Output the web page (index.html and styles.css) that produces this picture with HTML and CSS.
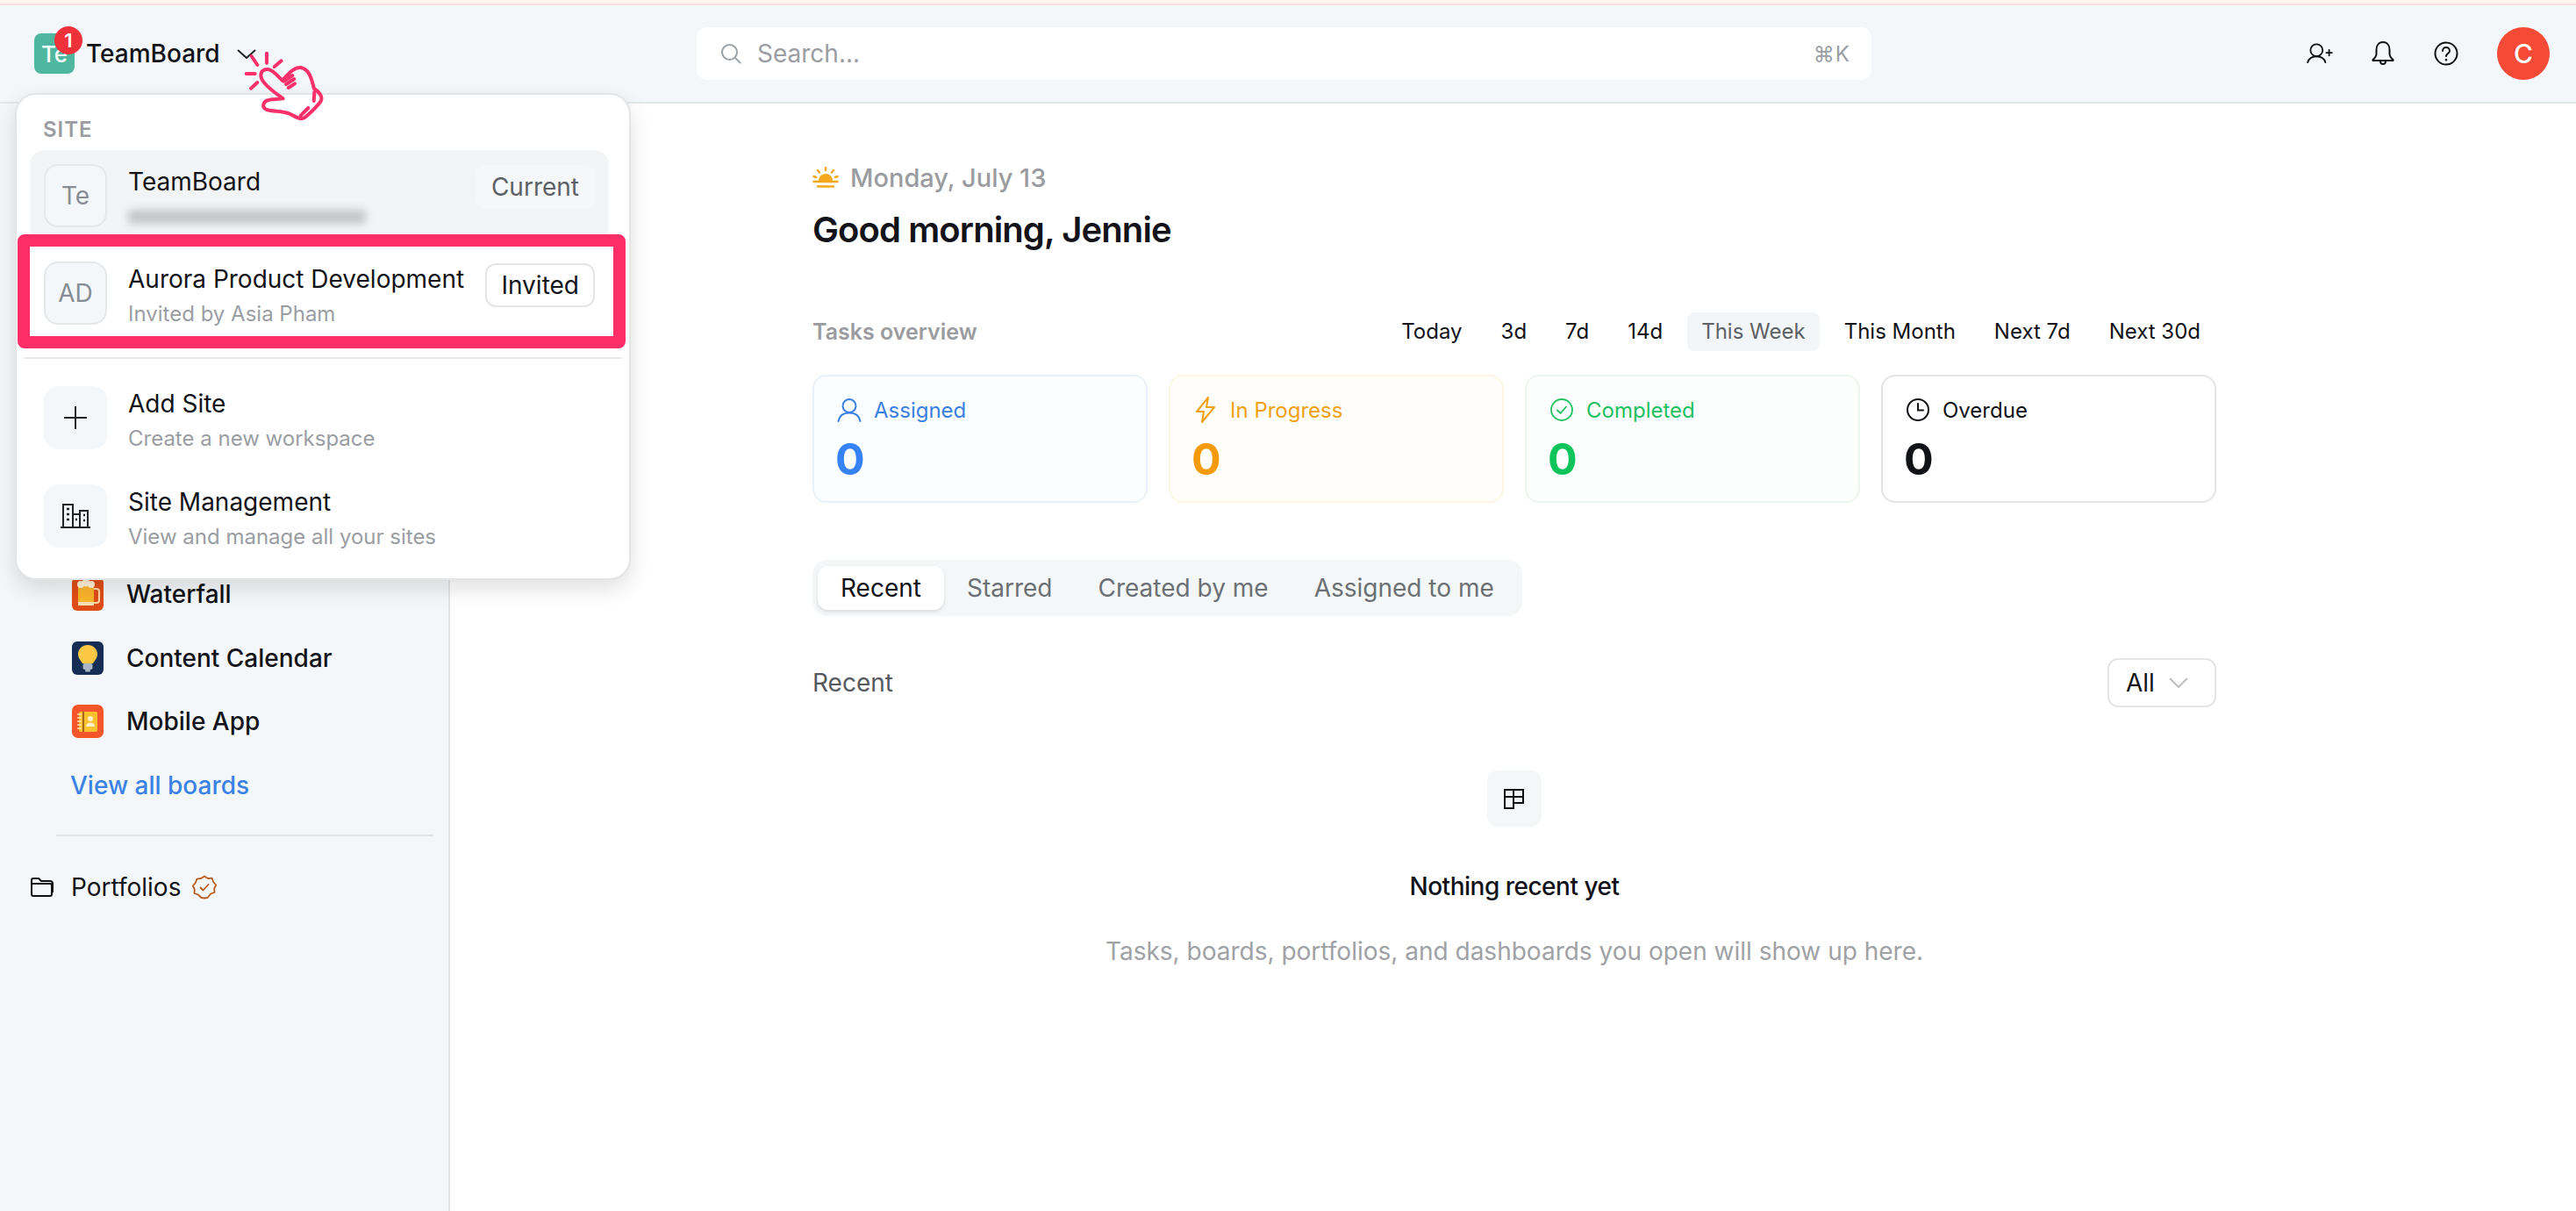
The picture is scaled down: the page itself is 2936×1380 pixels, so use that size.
FILE: index.html
```html
<!DOCTYPE html>
<html lang="en">
<head>
    <meta charset="UTF-8">
    <meta name="viewport" content="width=device-width, initial-scale=1.0">
    <title>TeamBoard</title>
    <link rel="stylesheet" href="styles.css">
</head>
<body>
    <div class="top-strip"></div>

    <header class="topbar">
        <div class="brand">
            <div class="brand-logo">Te<span class="brand-count">1</span></div>
            <span class="brand-name">TeamBoard</span>
            <svg class="brand-chevron" width="22" height="11" viewBox="0 0 22 11" fill="none" stroke="#222" stroke-width="2"><path d="M1 1l10 9 10-9"/></svg>
        </div>
        <div class="search">
            <svg width="24" height="24" viewBox="0 0 24 24" fill="none" stroke="#9ca3a8" stroke-width="2" stroke-linecap="round"><circle cx="10.5" cy="10.5" r="8.5"/><path d="M17 17l5.500 5.500"/></svg>
            <span class="search-text">Search...</span>
            <span class="search-key">⌘K</span>
        </div>
        <div class="actions">
            <button class="action-btn">
                <svg width="30" height="24" viewBox="0 0 32 26" fill="none" stroke="#111" stroke-width="2" stroke-linecap="round"><circle cx="12" cy="9" r="7.500"/><path d="M1 24c1.500-5 5-7.500 11-7.500s9.500 2.500 11 7.500M24 12h7M27.500 8.500v7"/></svg>
            </button>
            <button class="action-btn">
                <svg width="26" height="28" viewBox="0 0 26 28" fill="none" stroke="#111" stroke-width="2" stroke-linejoin="round"><path d="M13 1c-5 0-7.500 4-7.500 9v4c0 3-1.500 5-4 7v1h23v-1c-2.500-2-4-4-4-7v-4c0-5-2.500-9-7.500-9zM10 22.500c0 2 1.300 3.500 3 3.500s3-1.500 3-3.500"/></svg>
            </button>
            <button class="action-btn">
                <svg width="28" height="28" viewBox="0 0 28 28" fill="none" stroke="#111" stroke-width="2" stroke-linecap="round"><circle cx="14" cy="14" r="12.500"/><path d="M10 11c0-2.500 2-4 4-4s4 1.500 4 4c0 3-4 3-4 6"/><path d="M14 21v.2" stroke-width="2.500"/></svg>
            </button>
            <div class="user-avatar">C</div>
        </div>
    </header>

    <div class="layout">
        <aside class="sidebar">
            <a class="board-item" href="#">
                <svg class="board-icon" viewBox="0 0 36 38">
                    <rect width="36" height="38" rx="6" fill="#e04e18"/>
                    <path d="M24 13h4a3 3 0 0 1 3 3v10a3 3 0 0 1-3 3h-4" fill="none" stroke="#fbd9a8" stroke-width="2"/>
                    <rect x="7" y="9" width="18" height="23" rx="2" fill="#fbb52c"/>
                    <rect x="7" y="28" width="18" height="4" fill="#f9dfb4"/>
                    <circle cx="10" cy="8" r="4" fill="#fff1d6"/><circle cx="16" cy="6" r="4.500" fill="#fff1d6"/><circle cx="22" cy="8" r="4" fill="#fff1d6"/>
                </svg>
                <span>Waterfall</span>
            </a>
            <a class="board-item" href="#">
                <svg class="board-icon" viewBox="0 0 36 38">
                    <rect width="36" height="38" rx="6" fill="#162d55"/>
                    <path d="M18 4c6 0 11 4.500 11 10.500 0 4.500-3 7-5 10.500H12c-2-3.500-5-6-5-10.500C7 8.500 12 4 18 4z" fill="#fcc745"/>
                    <rect x="12.500" y="25" width="11" height="7" rx="2" fill="#a9b6c6"/>
                    <rect x="15" y="32" width="6" height="2.500" rx="1" fill="#a9b6c6"/>
                </svg>
                <span>Content Calendar</span>
            </a>
            <a class="board-item" href="#">
                <svg class="board-icon" viewBox="0 0 36 38">
                    <rect width="36" height="38" rx="7" fill="#f4552a"/>
                    <rect x="8" y="8" width="21" height="23" rx="2" fill="#fdc12f"/>
                    <rect x="12" y="8" width="2" height="23" fill="#a8641a"/>
                    <path d="M6 11h5M6 15h5M6 19h5M6 23h5M6 27h5" stroke="#fde2a6" stroke-width="1.500"/>
                    <circle cx="21" cy="16" r="3" fill="#fff0cc"/>
                    <path d="M16 25c0-3 2-4.500 5-4.500s5 1.500 5 4.500z" fill="#fff0cc"/>
                </svg>
                <span>Mobile App</span>
            </a>
            <a class="view-all" href="#">View all boards</a>
            <div class="sidebar-rule"></div>
            <a class="portfolios" href="#">
                <svg width="27" height="22" viewBox="0 0 27 22" fill="none" stroke="#111" stroke-width="2" stroke-linejoin="round"><path d="M1 7h21a2 2 0 0 1 2 2v10a2 2 0 0 1-2 2H3a2 2 0 0 1-2-2V3a2 2 0 0 1 2-2h6l3 3h10a3 3 0 0 1 3 3v10"/></svg>
                <span>Portfolios</span>
                <svg class="portfolio-badge" width="28" height="28" viewBox="0 0 28 28" fill="none" stroke="#b85c1e" stroke-width="1.800" stroke-linejoin="round" stroke-linecap="round"><path d="M14 1.500l4 2.500 4.500-.3 1.700 4.300 3 3.500-2 4 .3 4.500-4.300 1.500L17.500 26 14 26.500 10.500 26l-3.700-3.500L2.500 21l.3-4.500-2-4 3-3.500 1.700-4.300L10 4z"/><path d="M9.500 14.500l3 3 6-6.500"/></svg>
            </a>
        </aside>

        <main class="main">
            <div class="date-line">
                <svg width="30" height="24" viewBox="0 0 30 24" fill="none" stroke="#f5a81c" stroke-width="2.500" stroke-linecap="round"><path d="M7 16a8 8 0 0 1 16 0z" fill="#f5a81c" stroke="none"/><path d="M15 1v3M6 4l2 2.500M24 4l-2 2.500M1.500 11l2.500 1M28.500 11l-2.500 1M1.500 17h27M6 22.500h18"/></svg>
                <span>Monday, July 13</span>
            </div>
            <h1 class="greeting">Good morning, Jennie</h1>

            <div class="overview-head">
                <span class="overview-title">Tasks overview</span>
                <div class="ranges">
                    <span class="range">Today</span>
                    <span class="range">3d</span>
                    <span class="range">7d</span>
                    <span class="range">14d</span>
                    <span class="range range-active">This Week</span>
                    <span class="range">This Month</span>
                    <span class="range">Next 7d</span>
                    <span class="range">Next 30d</span>
                </div>
            </div>

            <div class="stats">
                <div class="stat stat-blue">
                    <div class="stat-label">
                        <svg width="28" height="28" viewBox="0 0 28 28" fill="none" stroke="currentColor" stroke-width="2" stroke-linecap="round"><circle cx="14" cy="9.500" r="7.500"/><path d="M1.500 27c1-6 5-9.500 12.500-9.500S25.500 21 26.500 27"/></svg>
                        <span>Assigned</span>
                    </div>
                    <div class="stat-value">0</div>
                </div>
                <div class="stat stat-amber">
                    <div class="stat-label">
                        <svg width="28" height="30" viewBox="0 0 24 30" fill="none" stroke="currentColor" stroke-width="2" stroke-linejoin="round"><path d="M15 1L2 17h8l-2 12 14-17h-9z"/></svg>
                        <span>In Progress</span>
                    </div>
                    <div class="stat-value">0</div>
                </div>
                <div class="stat stat-green">
                    <div class="stat-label">
                        <svg width="28" height="26" viewBox="0 0 26 26" fill="none" stroke="currentColor" stroke-width="1.800" stroke-linecap="round"><circle cx="13" cy="13" r="12"/><path d="M8 13.500l3.500 3.500L18 9.500"/></svg>
                        <span>Completed</span>
                    </div>
                    <div class="stat-value">0</div>
                </div>
                <div class="stat stat-plain">
                    <div class="stat-label">
                        <svg width="28" height="26" viewBox="0 0 26 26" fill="none" stroke="currentColor" stroke-width="2" stroke-linecap="round"><circle cx="13" cy="13" r="12"/><path d="M13 6v7.500h6"/></svg>
                        <span>Overdue</span>
                    </div>
                    <div class="stat-value">0</div>
                </div>
            </div>

            <div class="tabs">
                <span class="tab tab-active">Recent</span>
                <span class="tab">Starred</span>
                <span class="tab">Created by me</span>
                <span class="tab">Assigned to me</span>
            </div>

            <div class="recent-head">
                <span class="recent-title">Recent</span>
                <div class="select">
                    <span>All</span>
                    <svg width="22" height="12" viewBox="0 0 22 12" fill="none" stroke="#bdbdbd" stroke-width="2"><path d="M1 1l10 10L21 1"/></svg>
                </div>
            </div>

            <div class="empty">
                <div class="empty-icon">
                    <svg width="24" height="23" viewBox="0 0 24 23" fill="none" stroke="#111" stroke-width="2"><path d="M1 1h10v21H1zM11 1h11v15H11M1 9h21"/></svg>
                </div>
                <div class="empty-title">Nothing recent yet</div>
                <div class="empty-text">Tasks, boards, portfolios, and dashboards you open will show up here.</div>
            </div>
        </main>
    </div>

    <div class="site-menu">
        <div class="menu-label">SITE</div>
        <div class="menu-row menu-row-current">
            <div class="menu-avatar">Te</div>
            <div class="menu-text">
                <div class="menu-title">TeamBoard</div>
                <div class="menu-blur"></div>
            </div>
            <span class="menu-tag menu-tag-current">Current</span>
        </div>
        <div class="menu-row">
            <div class="menu-avatar">AD</div>
            <div class="menu-text">
                <div class="menu-title">Aurora Product Development</div>
                <div class="menu-sub">Invited by Asia Pham</div>
            </div>
            <span class="menu-tag menu-tag-invited">Invited</span>
        </div>
        <div class="menu-rule"></div>
        <div class="menu-row">
            <div class="menu-avatar menu-avatar-flat">
                <svg width="28" height="28" viewBox="0 0 28 28" fill="none" stroke="#222" stroke-width="2"><path d="M14 1v26M1 14h26"/></svg>
            </div>
            <div class="menu-text">
                <div class="menu-title">Add Site</div>
                <div class="menu-sub">Create a new workspace</div>
            </div>
        </div>
        <div class="menu-row">
            <div class="menu-avatar menu-avatar-flat">
                <svg width="34" height="28" viewBox="0 0 34 28" fill="none" stroke="#222" stroke-width="2"><path d="M0 27h34M3 27V1h11v26M14 27V12h8v15M22 27V8h9v19"/><path d="M7 6h3M7 12h3M7 18h3M17 18h2M26 13h2M26 19h2" stroke-width="2.500"/></svg>
            </div>
            <div class="menu-text">
                <div class="menu-title">Site Management</div>
                <div class="menu-sub">View and manage all your sites</div>
            </div>
        </div>
        <div class="invite-mark"></div>
    </div>

    <svg class="click-hand" width="120" height="95" viewBox="0 0 360 285" fill="none" stroke="#f9306a" stroke-width="12" stroke-linecap="round" stroke-linejoin="round">
        <path d="M80 42l20 30M132 32v33M182 58l-24 20M62 102h30M100 132l-22 20"/>
        <path d="M185 125c-15-15-30-35-48-38-18-2-28 10-24 28 6 22 40 48 75 72-20 3-46 0-58 8-13 9-13 24 2 30 20 7 55 4 78 14 20 9 36 22 50 14 18-12 38-34 52-50 14-16 8-32-18-50-10-40-18-66-45-72-22-3-40 18-64 44z"/>
        <path d="M190 128l30-20M198 138l28-18M206 150l22-14M295 165l-2 30M248 245l26-26"/>
    </svg>
</body>
</html>
```

FILE: styles.css
```css
* {
    box-sizing: border-box;
}
body {
    margin: 0;
    height: 1380px;
    overflow: hidden;
    position: relative;
    background-color: white;
    color: #111318;
    font-family: Inter, "Noto Sans", sans-serif;
    font-size: 28px;
}
a {
    text-decoration: none;
    color: inherit;
}
svg {
    display: block;
    flex-shrink: 0;
}
.top-strip {
    height: 6px;
    background-color: #fdf5ef;
    border-bottom: 2px solid #f9dfe0;
}

/* top bar */
.topbar {
    display: flex;
    align-items: center;
    height: 112px;
    padding: 0 30px 0 39px;
    background-color: #f4f7f9;
    border-bottom: 2px solid #e2e7ea;
}
.brand {
    display: flex;
    align-items: center;
    width: 755px;
    flex-shrink: 0;
}
.brand-logo {
    position: relative;
    display: flex;
    align-items: center;
    justify-content: center;
    width: 46px;
    height: 46px;
    border-radius: 8px;
    background-color: #4fb79f;
    color: white;
    font-size: 26px;
    font-weight: 500;
}
.brand-count {
    position: absolute;
    top: -8px;
    left: 23px;
    width: 32px;
    height: 32px;
    border-radius: 50%;
    background-color: #f0303a;
    font-size: 22px;
    font-weight: 600;
    line-height: 32px;
    text-align: center;
}
.brand-name {
    margin-left: 13px;
    font-weight: 500;
}
.brand-chevron {
    margin-left: 19px;
}
.search {
    display: flex;
    align-items: center;
    width: 1339px;
    height: 60px;
    padding: 0 24px 0 27px;
    border-radius: 12px;
    background-color: white;
    color: #9a9ea3;
}
.search-text {
    margin-left: 18px;
}
.search-key {
    margin-left: auto;
    font-size: 24px;
    letter-spacing: 1px;
}
.actions {
    display: flex;
    align-items: center;
    gap: 32px;
    margin-left: auto;
}
.action-btn {
    display: flex;
    align-items: center;
    justify-content: center;
    width: 40px;
    padding: 0;
    border: 0;
    background: none;
}
.user-avatar {
    display: flex;
    align-items: center;
    justify-content: center;
    width: 60px;
    height: 60px;
    margin-left: 6px;
    border-radius: 50%;
    background-color: #f44a36;
    color: white;
    font-size: 30px;
    font-weight: 500;
}

/* sidebar and content */
.layout {
    display: flex;
    height: 1262px;
}
.sidebar {
    width: 513px;
    flex-shrink: 0;
    padding-top: 523px;
    background-color: #f4f7f9;
    border-right: 2px solid #e2e5e8;
}
.board-item {
    display: flex;
    align-items: center;
    gap: 26px;
    height: 72.500px;
    padding-left: 82px;
    font-weight: 500;
}
.board-icon {
    width: 36px;
    height: 38px;
}
.view-all {
    display: flex;
    align-items: center;
    height: 72.500px;
    padding-left: 80px;
    color: #3b82e6;
    font-weight: 500;
}
.sidebar-rule {
    height: 2px;
    margin: 20px 17px 0 64px;
    background-color: #e2e5e8;
}
.portfolios {
    display: flex;
    align-items: center;
    height: 48px;
    margin-top: 34px;
    padding-left: 35px;
}
.portfolios span {
    margin-left: 19px;
}
.portfolio-badge {
    margin-left: 13px;
}
.main {
    flex: 1;
    padding: 64px 0 0 413px;
}
.main > * {
    width: 1600px;
}
.date-line {
    display: flex;
    align-items: center;
    gap: 13px;
    height: 40px;
    color: #9a9c9f;
    font-size: 29px;
    font-weight: 500;
}
.greeting {
    height: 56px;
    margin: 12px 0 0;
    font-size: 40px;
    font-weight: 600;
    line-height: 56px;
    letter-spacing: -0.9px;
}
.overview-head {
    display: flex;
    align-items: center;
    justify-content: space-between;
    margin-top: 66px;
}
.overview-title {
    color: #9a9c9f;
    font-size: 25px;
    font-weight: 600;
}
.ranges {
    display: flex;
    gap: 12px;
    margin-right: 2px;
}
.range {
    height: 44px;
    padding: 0 16px;
    border-radius: 8px;
    font-size: 24px;
    line-height: 44px;
}
.range-active {
    background-color: #f3f6f8;
    color: #5c6166;
}
.stats {
    display: grid;
    grid-template-columns: repeat(4, 1fr);
    gap: 24px;
    margin-top: 27px;
}
.stat {
    height: 146px;
    padding: 22px 26px;
    border: 2px solid;
    border-radius: 16px;
}
.stat-blue {
    background-color: #fbfeff;
    border-color: #e8f1f9;
    color: #3b7fe4;
}
.stat-amber {
    background-color: #fffefa;
    border-color: #fdf6e3;
    color: #f0a010;
}
.stat-green {
    background-color: #fbfefc;
    border-color: #edf5ef;
    color: #22c060;
}
.stat-plain {
    background-color: white;
    border-color: #e2e4e6;
    color: #111318;
}
.stat-label {
    display: flex;
    align-items: center;
    gap: 14px;
    height: 32px;
    font-size: 24px;
}
.stat-blue .stat-value {
    color: #3583f6;
}
.stat-amber .stat-value {
    color: #f59a0a;
}
.stat-green .stat-value {
    color: #0fc45a;
}
.stat-value {
    margin: 12px 0 0 -2px;
    font-size: 50px;
    font-weight: 700;
    line-height: 56px;
}
.tabs {
    display: flex;
    width: fit-content !important;
    height: 64px;
    margin-top: 65px;
    padding: 7px 6px;
    border-radius: 16px;
    background-color: #f4f7f8;
    color: #6b7075;
}
.tab {
    height: 50px;
    padding: 0 26px;
    border-radius: 12px;
    line-height: 50px;
}
.tab-active {
    background-color: white;
    box-shadow: 0 2px 4px rgba(0, 0, 0, 0.12);
    color: #111318;
}
.recent-head {
    display: flex;
    align-items: center;
    justify-content: space-between;
    margin-top: 48px;
}
.recent-title {
    color: #555a5e;
}
.select {
    display: flex;
    align-items: center;
    gap: 16px;
    width: 124px;
    height: 56px;
    padding: 0 0 0 19px;
    border: 2px solid #e4e5e7;
    border-radius: 12px;
}
.empty {
    display: flex;
    flex-direction: column;
    align-items: center;
    margin-top: 72px;
}
.empty-icon {
    display: flex;
    align-items: center;
    justify-content: center;
    width: 62px;
    height: 64px;
    border-radius: 12px;
    background-color: #f4f7f8;
}
.empty-title {
    margin-top: 48px;
    font-weight: 500;
    line-height: 40px;
    letter-spacing: -0.5px;
}
.empty-text {
    margin-top: 34px;
    color: #9fa2a5;
    line-height: 40px;
}

/* dropdown over the sidebar */
.site-menu {
    position: absolute;
    top: 106px;
    left: 17px;
    width: 702px;
    height: 555px;
    padding: 18px 23px 0 15px;
    border: 2px solid #e2e4e6;
    border-radius: 24px;
    background-color: white;
    box-shadow: 0 10px 24px rgba(0, 0, 0, 0.12);
}
.menu-label {
    height: 45px;
    padding-left: 15px;
    color: #9a9c9f;
    font-size: 24px;
    font-weight: 600;
    letter-spacing: 1px;
    line-height: 44px;
}
.menu-row {
    display: flex;
    align-items: center;
    height: 104px;
    margin-bottom: 8px;
    padding: 0 16px;
    border-radius: 16px;
}
.menu-row-current {
    margin-bottom: 7px;
    background-color: #f3f4f5;
}
.menu-avatar {
    display: flex;
    align-items: center;
    justify-content: center;
    width: 72px;
    height: 72px;
    flex-shrink: 0;
    border: 2px solid #e5e8eb;
    border-radius: 16px;
    background-color: #f4f7f9;
    color: #868d94;
}
.menu-avatar-flat {
    border-color: #f4f7f9;
}
.menu-text {
    flex: 1;
    margin-left: 24px;
    padding-top: 8px;
}
.menu-title {
    line-height: 40px;
    white-space: nowrap;
}
.menu-sub {
    color: #9a9ea3;
    font-size: 24px;
    line-height: 40px;
}
.menu-blur {
    width: 271px;
    height: 16px;
    margin: 12px 0;
    background-color: #c4c6c9;
    filter: blur(5px);
}
.menu-tag {
    height: 50px;
    border-radius: 12px;
    flex-shrink: 0;
}
.menu-tag-current {
    margin-top: -20px;
    padding: 0 18px;
    background-color: #f5f7f8;
    color: #5c6166;
    line-height: 50px;
}
.menu-tag-invited {
    margin-top: -19px;
    padding: 0 16px;
    border: 2px solid #e4e5e7;
    background-color: white;
    line-height: 46px;
}
.menu-rule {
    height: 2px;
    margin: 21px -15px 15px -7px;
    background-color: #e7e9eb;
}

/* annotations drawn on the screenshot */
.invite-mark {
    position: absolute;
    top: 159px;
    left: 1px;
    width: 693px;
    height: 130px;
    border: 14px solid #fe2f68;
    border-radius: 8px;
}
.click-hand {
    position: absolute;
    top: 50px;
    left: 260px;
}
```
